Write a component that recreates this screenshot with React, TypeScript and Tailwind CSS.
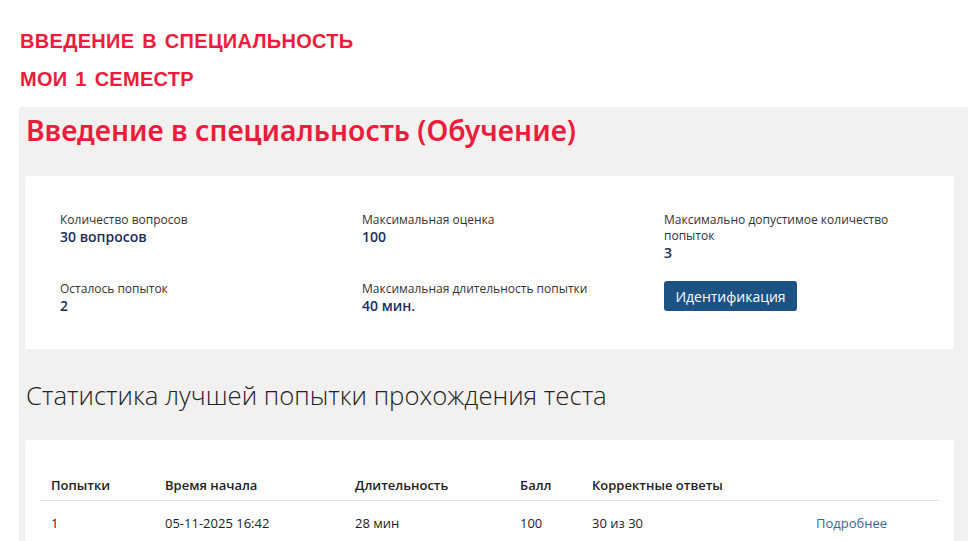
import React from 'react';

const info = [
  { label: 'Количество вопросов', value: '30 вопросов' },
  { label: 'Максимальная оценка', value: '100' },
  { label: 'Максимально допустимое количество попыток', value: '3' },
  { label: 'Осталось попыток', value: '2' },
  { label: 'Максимальная длительность попытки', value: '40 мин.' },
];

const rows = [
  { n: '1', start: '05-11-2025 16:42', dur: '28 мин', score: '100', correct: '30 из 30' },
];

export default function App() {
  return (
    <div className="w-[968px] h-[541px] overflow-hidden bg-white font-['Open_Sans',sans-serif]">
      <div className="px-5 pt-[30px] font-['Liberation_Sans',Arial,sans-serif] font-bold text-[20px] leading-[22px] text-[#ec1c3c] uppercase tracking-[0.3px] [word-spacing:2px]">
        <div>Введение в специальность</div>
        <div className="mt-4">Мои 1 семестр</div>
      </div>

      <div className="ml-[19px] mt-[17px] bg-[#f2f1ef] pl-[6px] pr-[14px] pb-10">
        <h1 className="pl-[1px] pt-[3px] h-[69px] text-[28.3px] leading-[40px] font-semibold text-[#ec1c3c] font-['Noto_Sans',sans-serif]">
          Введение в специальность (Обучение)
        </h1>

        <div className="bg-white rounded-[3px] h-[173px] pl-[35px] pt-[36px]">
          <div className="grid grid-cols-[302px_302px_250px] gap-y-[19px]">
            {info.map((it, i) => (
              <div key={i} className={i === 3 ? 'col-start-1' : ''}>
                <div className="text-[12px] leading-[16px] text-[#333]">{it.label}</div>
                <div className="text-[14px] leading-[18px] font-semibold text-[#1b2d5b]">{it.value}</div>
              </div>
            ))}
            <div>
              <button className="h-[30px] w-[133px] rounded-[3px] bg-[#1d5285] text-white text-[14px] font-medium">
                Идентификация
              </button>
            </div>
          </div>
        </div>

        <h2 className="pl-[1px] mt-[27px] text-[25.7px] leading-[40px] font-light text-[#222]">
          Статистика лучшей попытки прохождения теста
        </h2>

        <div className="mt-[24px] bg-white rounded-[3px] px-[15px] pt-[32px] pb-6">
          <table className="w-full text-[13px] text-[#222] border-collapse">
            <thead>
              <tr className="border-b border-[#e4e4e4] text-left">
                <th className="w-[114px] pl-[11px] h-[28px] font-semibold">Попытки</th>
                <th className="w-[190px] pl-[11px] font-semibold">Время начала</th>
                <th className="w-[165px] pl-[11px] font-semibold">Длительность</th>
                <th className="w-[72px] pl-[11px] font-semibold">Балл</th>
                <th className="w-[224px] pl-[11px] font-semibold">Корректные ответы</th>
                <th></th>
              </tr>
            </thead>
            <tbody>
              {rows.map(r => (
                <tr key={r.n}>
                  <td className="pl-[11px] h-[46px]">{r.n}</td>
                  <td className="pl-[11px]">{r.start}</td>
                  <td className="pl-[11px]">{r.dur}</td>
                  <td className="pl-[11px]">{r.score}</td>
                  <td className="pl-[11px]">{r.correct}</td>
                  <td className="pl-[11px] text-[#34679f]">Подробнее</td>
                </tr>
              ))}
            </tbody>
          </table>
        </div>
      </div>
    </div>
  );
}
